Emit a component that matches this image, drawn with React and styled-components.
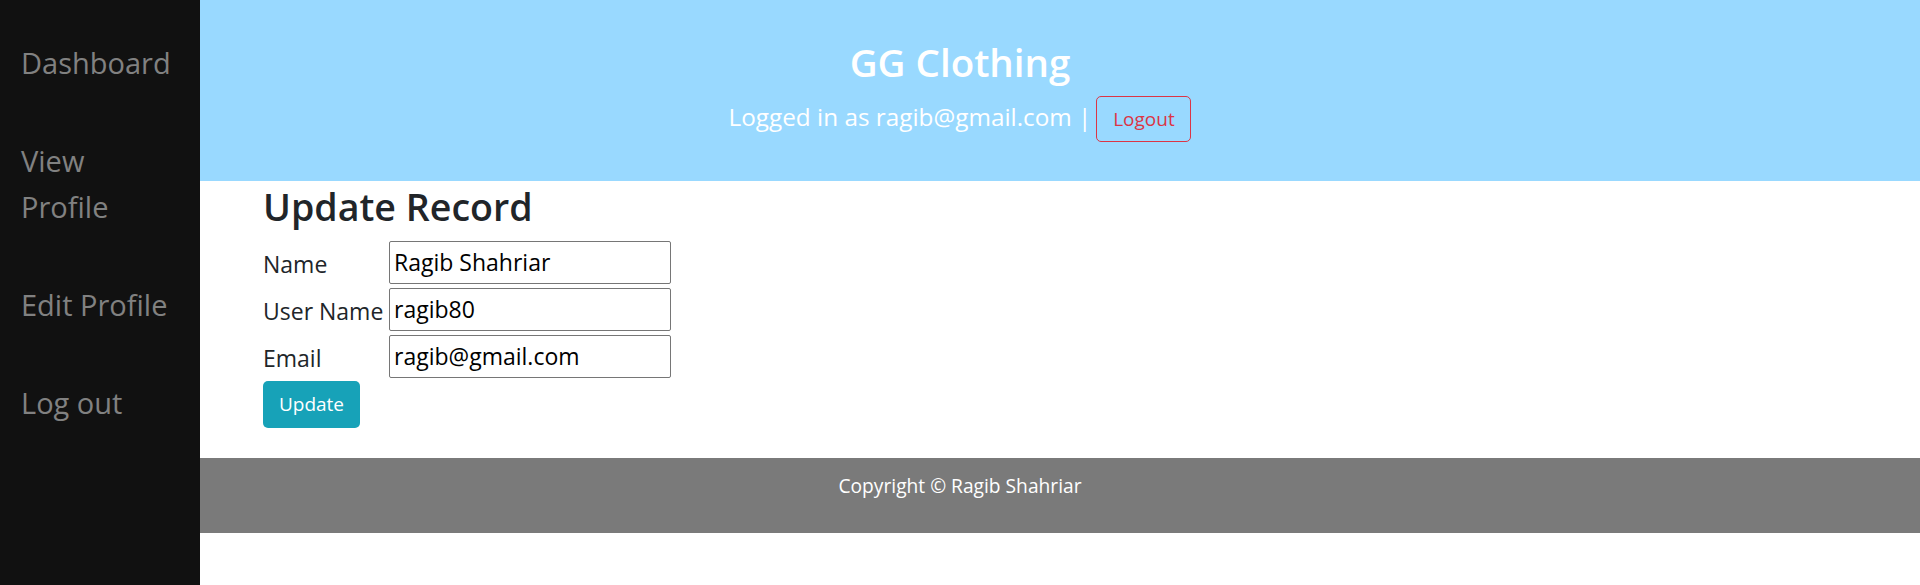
import React from 'react'
import styled, { createGlobalStyle } from 'styled-components'

const GlobalStyle = createGlobalStyle`
body {
  margin: 0;
  font-family: "Open Sans", "Noto Sans", sans-serif;
  color: #212529;
  background: #fff;
}
* { box-sizing: border-box; }
`

const Page = styled.div`
display: grid;
grid-template-columns: 200px 1fr;
min-height: 100vh;
`

const Sidebar = styled.nav`
background: #111;
display: flex;
flex-direction: column;
gap: 52px;
padding: 40px 27px 0 21px;
`

const NavLink = styled.a`
font-size: 29px;
line-height: 46px;
color: #818181;
text-decoration: none;
cursor: pointer;
&:hover { color: #f1f1f1; }
`

const Main = styled.div`
display: flex;
flex-direction: column;
`

const Header = styled.header`
background: #99d9ff;
height: 181px;
padding: 39px 200px 0 0;
display: flex;
flex-direction: column;
align-items: center;
`

const Brand = styled.h1`
margin: 0 0 11.2px;
font-size: 38.5px;
font-weight: 600;
line-height: 1.2;
color: #fff;
`

const UserRow = styled.div`
display: flex;
align-items: flex-start;
gap: 5px;
`

const UserText = styled.span`
font-size: 24.3px;
line-height: 42px;
color: #fff;
`

const OutlineButton = styled.button`
width: 95px;
height: 46px;
border: 1.25px solid #dc3545;
border-radius: 5px;
background: transparent;
color: #dc3545;
font-family: inherit;
font-size: 19px;
cursor: pointer;
`

const Content = styled.section`
padding: 3px 0 30px 63px;
`

const Title = styled.h2`
margin: 0 0 11.4px;
font-size: 37.6px;
font-weight: 600;
line-height: 1.2;
`

const Form = styled.form`
display: grid;
grid-template-columns: 126px 282px;
row-gap: 4px;
align-items: center;
justify-content: start;
`

const Label = styled.label`
font-size: 23px;
padding-top: 4px;
white-space: nowrap;
`

const Input = styled.input`
height: 43px;
border: 1px solid #767676;
border-radius: 2px;
padding: 0 4px;
font-family: inherit;
font-size: 23px;
color: #000;
`

const SubmitButton = styled.button`
grid-column: 1;
justify-self: start;
margin-top: -1px;
width: 97px;
height: 47px;
border: none;
border-radius: 5px;
background: #17a2b8;
color: #fff;
font-family: inherit;
font-size: 19px;
cursor: pointer;
`

const Footer = styled.footer`
background: #7a7a7a;
height: 75px;
padding: 13.6px 200px 0 0;
text-align: center;
`

const FooterText = styled.p`
margin: 0;
font-size: 19.2px;
line-height: 30px;
color: #fff;
`

const fields = [
  { label: 'Name', value: 'Ragib Shahriar' },
  { label: 'User Name', value: 'ragib80' },
  { label: 'Email', value: 'ragib@gmail.com' },
]

const App = () => {
    return (
        <Page>
            <GlobalStyle />
            <Sidebar>
                <NavLink>Dashboard</NavLink>
                <NavLink>View Profile</NavLink>
                <NavLink>Edit Profile</NavLink>
                <NavLink>Log out</NavLink>
            </Sidebar>
            <Main>
                <Header>
                    <Brand>GG Clothing</Brand>
                    <UserRow>
                        <UserText>Logged in as ragib@gmail.com |</UserText>
                        <OutlineButton>Logout</OutlineButton>
                    </UserRow>
                </Header>
                <Content>
                    <Title>Update Record</Title>
                    <Form onSubmit={e => e.preventDefault()}>
                        {fields.map(f => (
                            <React.Fragment key={f.label}>
                                <Label>{f.label}</Label>
                                <Input defaultValue={f.value} />
                            </React.Fragment>
                        ))}
                        <SubmitButton>Update</SubmitButton>
                    </Form>
                </Content>
                <Footer>
                    <FooterText>Copyright © Ragib Shahriar</FooterText>
                </Footer>
            </Main>
        </Page>
    )
}

export default App
